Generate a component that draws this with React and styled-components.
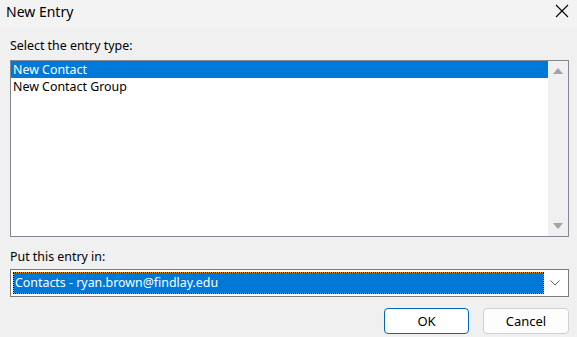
import React from "react";
import styled, { createGlobalStyle } from "styled-components";

const Global = createGlobalStyle`
  html, body { margin: 0; padding: 0; background: #f0f0f0; }
  body { font-family: "Segoe UI", "Noto Sans", "Open Sans", sans-serif; }
`;

const Window = styled.div`
  width: 577px;
  height: 337px;
  background: #f0f0f0;
  display: flex;
  flex-direction: column;
  overflow: hidden;
  color: #000;
`;

const TitleBar = styled.div`
  height: 28px;
  background: #f3f3f3;
  display: flex;
  align-items: center;
  justify-content: space-between;
  padding: 0 8px 0 6px;
  box-sizing: border-box;
`;

const Title = styled.div`
  font-size: 14px;
  line-height: 20px;
  margin-top: -4px;
`;

const Close = styled.div`
  width: 14px;
  height: 14px;
  display: flex;
  margin-top: -6px;
`;

const Body = styled.div`
  flex: 1;
  padding: 10px 8px 0 10px;
  display: flex;
  flex-direction: column;
`;

const Label = styled.div`
  font-size: 12.4px;
  line-height: 16px;
  height: 16px;
  margin-top: ${(p) => p.$top || 0}px;
  margin-bottom: ${(p) => p.$bottom || 0}px;
`;

const ListBox = styled.div`
  height: 177px;
  border: 1px solid #828790;
  background: #fff;
  box-sizing: border-box;
  display: flex;
`;

const Items = styled.div`
  flex: 1;
  display: flex;
  flex-direction: column;
`;

const Item = styled.div`
  height: 17px;
  line-height: 17px;
  font-size: 12.4px;
  padding-left: 2px;
  background: ${(p) => (p.$selected ? "#0078d7" : "transparent")};
  color: ${(p) => (p.$selected ? "#fff" : "#000")};
  white-space: nowrap;
`;

const ScrollBar = styled.div`
  width: 20px;
  background: #f0f0f0;
  display: flex;
  flex-direction: column;
  justify-content: space-between;
  align-items: center;
  padding: 7px 0 7px;
`;

const Combo = styled.div`
  height: 28px;
  border: 1px solid #7a7a7a;
  background: #fff;
  box-sizing: border-box;
  display: flex;
  align-items: center;
  padding: 2px;
`;

const ComboValue = styled.div`
  flex: 1;
  height: 22px;
  box-sizing: border-box;
  border: 1px dotted #000;
  background: linear-gradient(#0078d7, #0078d7) padding-box, #f29a1e border-box;
  color: #fff;
  font-size: 12.4px;
  line-height: 19px;
  padding-left: 1px;
  white-space: nowrap;
`;

const Chevron = styled.div`
  width: 22px;
  display: flex;
  justify-content: center;
  align-items: center;
`;

const Buttons = styled.div`
  display: flex;
  justify-content: flex-end;
  gap: 14px;
  margin-top: 11px;
`;

const Button = styled.button`
  width: ${(p) => p.$w}px;
  height: 26px;
  box-sizing: border-box;
  border-radius: 4px;
  border: 1px solid ${(p) => (p.$primary ? "#0067c0" : "#d0d0d0")};
  background: ${(p) => (p.$primary ? "#fff" : "#fdfdfd")};
  font-family: inherit;
  font-size: 13px;
  color: #000;
  padding: 0;
`;

export default function App() {
  return (
    <Window>
      <Global />
      <TitleBar>
        <Title>New Entry</Title>
        <Close>
          <svg width="14" height="14" viewBox="0 0 14 14">
            <path d="M1 1 L13 13 M13 1 L1 13" stroke="#000" strokeWidth="1.1" />
          </svg>
        </Close>
      </TitleBar>
      <Body>
        <Label $bottom={6}>Select the entry type:</Label>
        <ListBox>
          <Items>
            <Item $selected>New Contact</Item>
            <Item>New Contact Group</Item>
          </Items>
          <ScrollBar>
            <svg width="10" height="6" viewBox="0 0 10 6">
              <path d="M0 6 L5 0 L10 6 Z" fill="#a3a3a3" />
            </svg>
            <svg width="10" height="6" viewBox="0 0 10 6">
              <path d="M0 0 L5 6 L10 0 Z" fill="#a3a3a3" />
            </svg>
          </ScrollBar>
        </ListBox>
        <Label $top={12} $bottom={4}>Put this entry in:</Label>
        <Combo>
          <ComboValue>Contacts - ryan.brown@findlay.edu</ComboValue>
          <Chevron>
            <svg width="10" height="6" viewBox="0 0 10 6">
              <path d="M0.5 0.5 L5 5 L9.5 0.5" stroke="#606060" strokeWidth="1" fill="none" />
            </svg>
          </Chevron>
        </Combo>
        <Buttons>
          <Button $primary $w={85}>OK</Button>
          <Button $w={86}>Cancel</Button>
        </Buttons>
      </Body>
    </Window>
  );
}
